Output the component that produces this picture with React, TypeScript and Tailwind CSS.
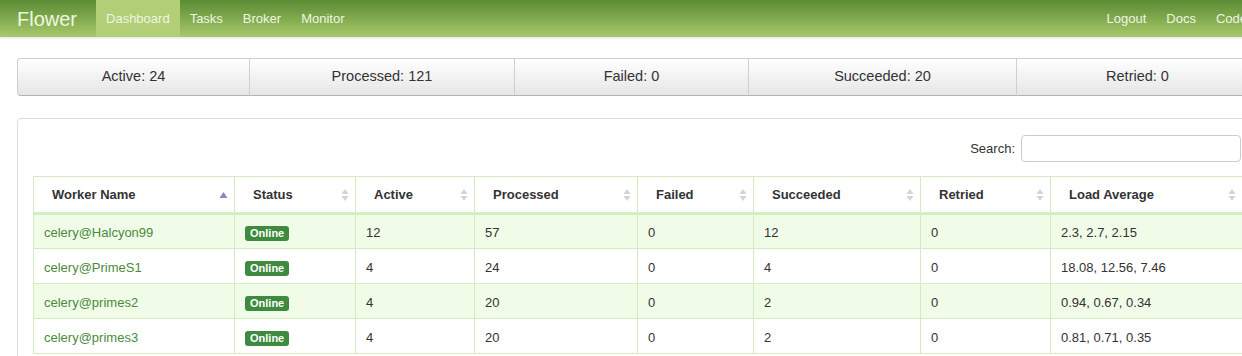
import React from 'react';

const font = { fontFamily: '"Liberation Sans", Arial, sans-serif' };

const stats = [
  { label: 'Active: 24', w: 'w-[233px]' },
  { label: 'Processed: 121', w: 'w-[266px]' },
  { label: 'Failed: 0', w: 'w-[235px]' },
  { label: 'Succeeded: 20', w: 'w-[269px]' },
  { label: 'Retried: 0', w: 'w-[243px]' },
];

const columns = [
  { name: 'Worker Name', w: 'w-[201px]', sorted: true },
  { name: 'Status', w: 'w-[121px]' },
  { name: 'Active', w: 'w-[119px]' },
  { name: 'Processed', w: 'w-[163px]' },
  { name: 'Failed', w: 'w-[116px]' },
  { name: 'Succeeded', w: 'w-[167px]' },
  { name: 'Retried', w: 'w-[130px]' },
  { name: 'Load Average', w: 'w-[192px]' },
];

const workers = [
  ['celery@Halcyon99', '12', '57', '0', '12', '0', '2.3, 2.7, 2.15'],
  ['celery@PrimeS1', '4', '24', '0', '4', '0', '18.08, 12.56, 7.46'],
  ['celery@primes2', '4', '20', '0', '2', '0', '0.94, 0.67, 0.34'],
  ['celery@primes3', '4', '20', '0', '2', '0', '0.81, 0.71, 0.35'],
];

const SortIcon = ({ active }: { active?: boolean }) =>
  active ? (
    <svg width="9" height="8" viewBox="0 0 9 8" className="shrink-0">
      <polygon points="4.5,1 8.5,7 0.5,7" fill="#8b87c9" />
    </svg>
  ) : (
    <svg width="8" height="14" viewBox="0 0 8 14" className="shrink-0">
      <polygon points="4,1 7.5,6 0.5,6" fill="#d4d4d4" />
      <polygon points="4,13 7.5,8 0.5,8" fill="#d4d4d4" />
    </svg>
  );

export default function App() {
  return (
    <div className="w-[1242px] h-[356px] overflow-hidden bg-white" style={font}>
      <div className="w-[1300px]">
        {/* Navbar */}
        <div className="h-[37px] flex items-stretch bg-gradient-to-b from-[#5a8c33] to-[#a9c96b] shadow-[0_1px_2px_rgba(0,0,0,0.12)]">
          <div className="pl-[17px] pr-[19px] flex items-center text-[20px] text-[#eef6e2] leading-none">Flower</div>
          <div className="px-[10px] flex items-center text-[13px] text-[#eef6e2] bg-[#b2ce76]">Dashboard</div>
          <div className="px-[10px] flex items-center text-[13px] text-[#eef6e2]">Tasks</div>
          <div className="px-[10px] flex items-center text-[13px] text-[#eef6e2]">Broker</div>
          <div className="px-[10px] flex items-center text-[13px] text-[#eef6e2]">Monitor</div>
          <div className="ml-[742px] px-[10px] flex items-center text-[13px] text-[#eef6e2]">Logout</div>
          <div className="px-[10px] flex items-center text-[13px] text-[#eef6e2]">Docs</div>
          <div className="px-[10px] flex items-center text-[13px] text-[#eef6e2]">Code</div>
        </div>

        {/* Stats */}
        <div className="mt-[21px] ml-[17px] flex">
          {stats.map((s, i) => (
            <div
              key={s.label}
              className={`${s.w} h-[38px] flex items-center justify-center text-[14.5px] text-[#333] bg-gradient-to-b from-white to-[#e6e6e6] border border-[#cfcfcf] border-b-[#b3b3b3] ${i === 0 ? 'rounded-l-[4px]' : '-ml-px'}`}
            >
              {s.label}
            </div>
          ))}
        </div>

        {/* Panel */}
        <div className="mt-[22px] ml-[17px] w-[1242px] border border-[#dddddd] rounded-tl-[4px] px-[15px] pt-[16px] pb-4">
          <div className="flex justify-end items-center gap-[6px] pr-[2px]">
            <span className="text-[13px] text-[#333]">Search:</span>
            <div className="w-[220px] h-[27px] border border-[#cccccc] rounded-[4px] bg-white" />
          </div>
          <table className="mt-[14px] border-collapse text-[13px] table-fixed w-[1209px]">
            <thead>
              <tr className="h-[37px]">
                {columns.map((c) => (
                  <th
                    key={c.name}
                    className={`${c.w} border border-[#d6e9c6] border-b-[3px] border-b-[#d3edc0] text-left font-bold text-[#333] pl-[18px] pr-[6px]`}
                  >
                    <div className="flex items-center justify-between">
                      <span>{c.name}</span>
                      <SortIcon active={c.sorted} />
                    </div>
                  </th>
                ))}
              </tr>
            </thead>
            <tbody>
              {workers.map((r, i) => (
                <tr key={r[0]} className={`h-[35px] ${i % 2 === 0 ? 'bg-[#f0fbe8]' : 'bg-white'}`}>
                  <td className="border border-[#d6e9c6] pl-[10px] pt-[3px] text-[#4b8a3c]">{r[0]}</td>
                  <td className="border border-[#d6e9c6] pl-[10px] pt-[3px]">
                    <span className="inline-block px-[5px] h-[15px] leading-[15px] rounded-[3px] bg-[#3e8a3f] text-white text-[11px] font-bold">
                      Online
                    </span>
                  </td>
                  {r.slice(1).map((v, j) => (
                    <td key={j} className="border border-[#d6e9c6] pl-[10px] pt-[3px] text-[#333]">
                      {v}
                    </td>
                  ))}
                </tr>
              ))}
            </tbody>
          </table>
        </div>
      </div>
    </div>
  );
}
